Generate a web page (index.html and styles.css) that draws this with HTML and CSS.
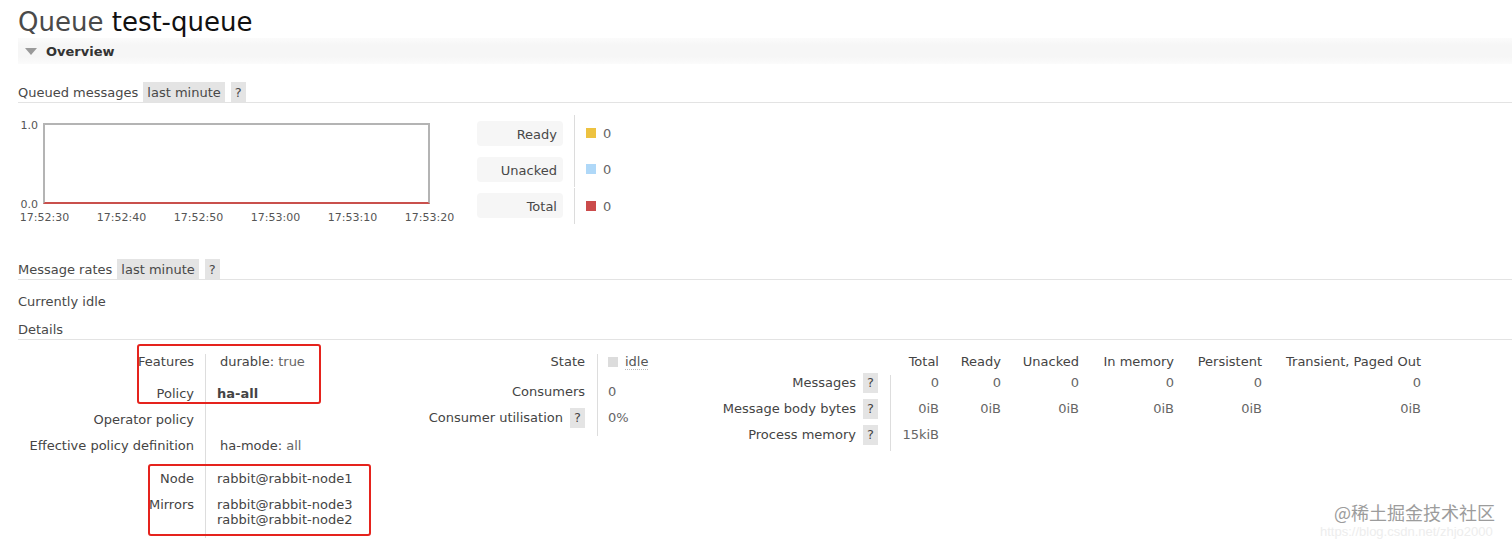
FILE: index.html
```html
<!DOCTYPE html>
<html>
<head>
<meta charset="utf-8">
<title>Queue test-queue</title>
<link rel="stylesheet" href="styles.css">
</head>
<body>
<h1 class="title"><span class="title-kind">Queue</span> <span class="title-name">test-queue</span></h1>
<div class="section-bar"><span class="tri"></span><span>Overview</span></div>

<div class="subhead sub-queued"><span class="sub-text">Queued messages</span><span class="badge badge-range">last minute</span><span class="badge badge-help">?</span></div>

<div class="chart-row">
  <div class="chart">
    <div class="plot-row">
      <div class="yaxis"><span>1.0</span><span>0.0</span></div>
      <div class="plot"></div>
    </div>
    <div class="xaxis">
      <span>17:52:30</span><span>17:52:40</span><span>17:52:50</span><span>17:53:00</span><span>17:53:10</span><span>17:53:20</span>
    </div>
  </div>
  <div class="legend">
    <div class="legend-label"><span class="lbox">Ready</span></div>
    <div class="legend-value"><i class="sw sw-ready"></i><span class="lv">0</span></div>
    <div class="legend-label"><span class="lbox">Unacked</span></div>
    <div class="legend-value"><i class="sw sw-unacked"></i><span class="lv">0</span></div>
    <div class="legend-label"><span class="lbox">Total</span></div>
    <div class="legend-value"><i class="sw sw-total"></i><span class="lv">0</span></div>
  </div>
</div>

<div class="subhead sub-rates"><span class="sub-text">Message rates</span><span class="badge badge-range">last minute</span><span class="badge badge-help">?</span></div>
<div class="idle-note">Currently idle</div>
<div class="subhead sub-details"><span class="sub-text">Details</span></div>

<div class="details">
  <div class="facts-wrap">
    <table class="facts facts-left">
      <tr class="row-features"><th>Features</th><td><span class="kv">durable: <span class="val">true</span></span></td></tr>
      <tr><th>Policy</th><td><b class="policy">ha-all</b></td></tr>
      <tr><th>Operator policy</th><td></td></tr>
      <tr class="row-eff"><th>Effective policy definition</th><td><span class="kv">ha-mode: <span class="val">all</span></span></td></tr>
      <tr><th>Node</th><td class="val">rabbit@rabbit-node1</td></tr>
      <tr class="row-mirrors"><th>Mirrors</th><td class="val mirrors">rabbit@rabbit-node3<br>rabbit@rabbit-node2</td></tr>
    </table>
    <div class="mark mark-top"></div>
    <div class="mark mark-bottom"></div>
  </div>

  <table class="facts facts-mid">
    <tr class="row-state"><th>State</th><td><i class="state-dot"></i><abbr class="state-text">idle</abbr></td></tr>
    <tr><th>Consumers</th><td class="val">0</td></tr>
    <tr><th>Consumer utilisation <span class="badge badge-inline">?</span></th><td class="val">0%</td></tr>
  </table>

  <table class="facts facts-right">
    <tr class="row-head">
      <th></th>
      <td class="c1">Total</td><td class="c2">Ready</td><td class="c3">Unacked</td><td class="c4">In memory</td><td class="c5">Persistent</td><td class="c6">Transient, Paged Out</td>
    </tr>
    <tr>
      <th>Messages <span class="badge badge-inline">?</span></th>
      <td class="n c1">0</td><td class="n c2">0</td><td class="n c3">0</td><td class="n c4">0</td><td class="n c5">0</td><td class="n c6">0</td>
    </tr>
    <tr>
      <th>Message body bytes <span class="badge badge-inline">?</span></th>
      <td class="n c1">0iB</td><td class="n c2">0iB</td><td class="n c3">0iB</td><td class="n c4">0iB</td><td class="n c5">0iB</td><td class="n c6">0iB</td>
    </tr>
    <tr class="row-last">
      <th>Process memory <span class="badge badge-inline">?</span></th>
      <td class="n c1">15kiB</td><td></td><td></td><td></td><td></td><td></td>
    </tr>
  </table>
</div>

<div class="watermark">@稀土掘金技术社区</div>
<div class="watermark-url">https://blog.csdn.net/zhjo2000</div>
</body>
</html>
```

FILE: styles.css
```css
* { box-sizing: border-box; }
html, body { margin: 0; background: #fff; }
body {
  font-family: "DejaVu Sans", Verdana, sans-serif;
  font-size: 13px;
  line-height: 16px;
  color: #484848;
  padding: 0 0 0 18px;
  position: relative;
  height: 541px;
  overflow: hidden;
}

.title {
  margin: 0;
  padding-top: 7px;
  height: 37px;
  font-size: 26px;
  line-height: 30px;
  font-weight: normal;
  white-space: nowrap;
}
.title-kind { color: #4a4a4a; }
.title-name { color: #111; }

.section-bar {
  margin-top: 1px;
  height: 26px;
  display: flex;
  align-items: center;
  padding-left: 7px;
  padding-top: 1px;
  background: linear-gradient(#fbfbfb, #f6f6f6 28%, #f6f6f6 72%, #fbfbfb);
  font-weight: bold;
  color: #333;
}
.tri {
  width: 0;
  height: 0;
  border-left: 6px solid transparent;
  border-right: 6px solid transparent;
  border-top: 7px solid #9a9a9a;
  margin-right: 9px;
}

.subhead {
  display: flex;
  align-items: center;
  height: 21px;
  border-bottom: 1px solid #e3e3e3;
  white-space: nowrap;
}
.sub-text { padding-top: 2px; }
.sub-queued { margin-top: 18px; }
.sub-rates { margin-top: 35px; }
.sub-details { margin-top: 9px; }

.badge {
  display: inline-block;
  background: #e4e4e4;
  padding: 2px 4px 0;
  height: 20px;
  line-height: 18px;
}
.badge-range { margin-left: 5px; }
.badge-help { margin-left: 6px; }
.badge-inline {
  line-height: 16px;
  height: 20px;
  padding: 2px 4px;
  margin: -2px 0 -2px 3px;
  vertical-align: top;
}

/* chart */
.chart-row {
  display: flex;
  margin-top: 12px;
}
.chart {
  flex: none;
  width: 459px;
  padding-top: 8px;
}
.plot-row {
  display: flex;
  align-items: flex-start;
}
.yaxis {
  width: 20px;
  margin-right: 5px;
  margin-top: -4px;
  height: 92px;
  display: flex;
  flex-direction: column;
  justify-content: space-between;
  align-items: flex-end;
  font-size: 11px;
  line-height: 13px;
  color: #555;
}
.plot {
  width: 387px;
  height: 81px;
  border: 2px solid #b4b4b4;
  border-bottom-color: #c9504c;
  background: #fff;
}
.xaxis {
  display: flex;
  margin-left: -12px;
  font-size: 11px;
  line-height: 13px;
  color: #555;
}
.xaxis span {
  flex: 0 0 77px;
  text-align: center;
}

.legend {
  display: grid;
  grid-template-columns: 97px auto;
}
.legend-label {
  height: 36px;
  display: flex;
  align-items: center;
}
.lbox {
  width: 86px;
  height: 25px;
  padding-top: 2px;
  line-height: 23px;
  text-align: right;
  padding-right: 6px;
  background: #f6f6f6;
  border-radius: 4px;
}
.legend-value {
  height: 36px;
  display: flex;
  align-items: center;
  border-left: 1px solid #dcdcdc;
  padding-left: 11px;
  color: #666;
}
.lv { padding-top: 2px; }
.sw {
  width: 10px;
  height: 10px;
  margin-right: 7px;
}
.sw-ready { background: #edc240; }
.sw-unacked { background: #afd8f8; }
.sw-total { background: #cb4b4b; }

.idle-note {
  margin-top: 14px;
  height: 16px;
}

/* details */
.details {
  display: flex;
  align-items: flex-start;
  margin-top: 14px;
}
.facts {
  border-collapse: separate;
  border-spacing: 0;
  flex: none;
}
.facts th, .facts td {
  box-sizing: content-box;
  padding: 0 0 10px 0;
  vertical-align: top;
  white-space: nowrap;
}
.facts th {
  font-weight: normal;
  text-align: right;
  color: #444;
}
.val { color: #666; }

.facts-wrap {
  position: relative;
  flex: none;
  width: 400px;
}
.facts-left th { width: 176px; padding-right: 11px; }
.facts-left td { border-left: 1px solid #ddd; padding-left: 11px; color: #444; }
.facts-left .row-features th, .facts-left .row-features td { padding-bottom: 16px; }
.facts-left .row-eff th, .facts-left .row-eff td { padding-bottom: 17px; }
.facts-left .row-mirrors td { line-height: 15px; padding-bottom: 11px; }
.facts-left .row-mirrors th { padding-bottom: 25px; }
.kv { margin-left: 3px; }
.policy { color: #444; }
.mirrors { color: #666; }

.mark {
  position: absolute;
  border: 2px solid #e5231d;
  border-radius: 3px;
}
.mark-top { left: 119px; top: -10px; width: 184px; height: 60px; }
.mark-bottom { left: 130px; top: 110px; width: 223px; height: 72px; }

.facts-mid { width: 282px; }
.facts-mid th { width: 167px; padding-right: 12px; }
.facts-mid td { border-left: 1px solid #ddd; padding-left: 10px; width: 92px; }
.facts-mid .row-state th, .facts-mid .row-state td { padding-bottom: 14px; }
.state-dot {
  display: inline-block;
  width: 10px;
  height: 10px;
  background: #dcdcdc;
  margin-right: 7px;
  vertical-align: -1px;
}
.state-text {
  text-decoration: none;
  border-bottom: 1px dotted #bbb;
  color: #555;
}

.facts-right th { width: 178px; padding-right: 12px; }
.facts-right .row-head th, .facts-right .row-head td { padding-bottom: 5px; }
.facts-right .row-head td { text-align: right; color: #444; }
.facts-right tr:not(.row-head) td.c1 { border-left: 1px solid #ddd; }
.facts-right .row-last th, .facts-right .row-last td { padding-bottom: 8px; }
.facts-right .n { text-align: right; color: #666; }
.facts-right .c1 { width: 48px; }
.facts-right .c2 { width: 62px; }
.facts-right .c3 { width: 78px; }
.facts-right .c4 { width: 95px; }
.facts-right .c5 { width: 88px; }
.facts-right .c6 { width: 159px; }

.watermark {
  position: absolute;
  left: 1334px;
  top: 501px;
  font-family: "Noto Sans CJK SC", "DejaVu Sans", sans-serif;
  font-size: 18px;
  line-height: 22px;
  color: #9c9c9c;
  white-space: nowrap;
  text-shadow: 0 0 1px #fff;
}
.watermark-url {
  position: absolute;
  left: 1320px;
  top: 524px;
  font-family: "Liberation Sans", sans-serif;
  font-size: 13px;
  line-height: 15px;
  color: #ededed;
  white-space: nowrap;
}
```
